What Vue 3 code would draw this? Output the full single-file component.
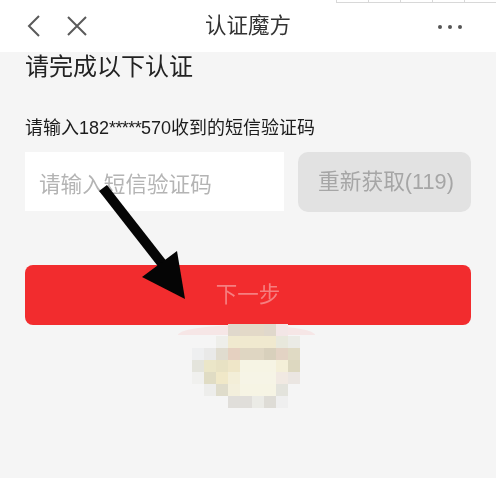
<template>
  <div class="page">
    <!-- restos de la captura arriba a la derecha -->
    <div class="corner-lines">
      <span v-for="n in 5" :key="n"></span>
    </div>

    <header class="nav">
      <div class="nav-left">
        <svg class="icon" width="20" height="24" viewBox="0 0 20 24">
          <path d="M16 2 L6 12 L16 22" fill="none" stroke="#5a5a5a" stroke-width="2" />
        </svg>
        <svg class="icon" width="20" height="20" viewBox="0 0 20 20">
          <path d="M1 1 L19 19 M19 1 L1 19" fill="none" stroke="#5a5a5a" stroke-width="2" />
        </svg>
      </div>
      <div class="nav-title">认证魔方</div>
      <div class="nav-more">
        <i></i><i></i><i></i>
      </div>
    </header>

    <main class="content">
      <h2 class="title">请完成以下认证</h2>
      <p class="label">请输入182<span class="stars">*****</span>570收到的短信验证码</p>

      <div class="code-row">
        <div class="code-input">请输入短信验证码</div>
        <div class="code-btn">重新获取(119)</div>
      </div>

      <button class="btn-next">下一步</button>

      <div class="avatar">
        <div class="avatar-arc"></div>
        <div class="mosaic">
          <span
            v-for="(color, index) in mosaico"
            :key="index"
            class="cell"
            :style="{ backgroundColor: color }"
          ></span>
        </div>
      </div>
    </main>

    <svg class="arrow" width="496" height="478" viewBox="0 0 496 478">
      <path d="M103 188 L164 266" stroke="#050505" stroke-width="10" fill="none" />
      <path d="M185 299 L142 277 L177 251 Z" fill="#050505" />
    </svg>
  </div>
</template>

<script setup>
const t = 'transparent';

// Filas del pixelado del avatar (10 x 7, bloques de 12px)
const mosaico = [
  t, t, t, '#e0d8cc', '#e3d9c8', '#e3d9c8', '#e0d8cc', '#f3e6e6', t, t,
  t, t, '#eeeeea', '#f0e9cf', '#f0e9cf', '#f0e9cf', '#f0e9cf', '#e8e8dc', '#ebebe6', t,
  '#eeeff0', '#e9e9e8', '#e0dccf', '#e5d0c0', '#dfd6c2', '#dfd6c2', '#d8d0bc', '#e3d3c4', '#e0dac4', t,
  '#e4e4dc', '#ebe6c8', '#e8e2c4', '#efe6c8', '#f6f4e4', '#f6f4e4', '#f6f4e4', '#f4efd8', '#ddd8c0', t,
  '#f0f0ee', '#e0dcc4', '#f0e8c8', '#f3eed8', '#f6f4e6', '#f6f4e6', '#f6f4e6', '#f1e9e2', '#ebe6e2', t,
  t, '#ededeb', '#dfdccb', '#f3efdc', '#f6f4e4', '#f6f4e4', '#f6f4e4', '#e3e3dc', t, t,
  t, t, t, '#e0deda', '#e0deda', '#ebebe6', '#dedcd6', '#efefef', t, t
];
</script>

<style>
body { margin: 0; background: #f5f5f5; }
</style>

<style scoped>
.page {
  position: relative; width: 496px; height: 478px; overflow: hidden;
  background: #f5f5f5;
  font-family: "Liberation Sans", "Noto Sans CJK SC", sans-serif;
  filter: blur(0.4px);
}

/* Barra superior */
.nav {
  height: 52px; background: #fff;
  display: flex; align-items: center; justify-content: space-between;
  padding: 0 34px 0 23px; position: relative;
}
.nav-left { display: flex; align-items: center; gap: 24px; }
.icon { display: block; }
.nav-title {
  position: absolute; left: 0; right: 0; text-align: center;
  font-size: 21.5px; color: #333; line-height: 52px;
}
.nav-more { display: flex; gap: 6px; margin-top: 2px; }
.nav-more i { width: 4px; height: 4px; border-radius: 50%; background: #555; display: block; }

.corner-lines {
  position: absolute; top: 0; left: 336px; right: 0; height: 2px; z-index: 2;
  display: flex; border-bottom: 1px solid #d8d8d8;
}
.corner-lines span { width: 33px; border-left: 1px solid #d8d8d8; }

/* Contenido */
.content { padding: 0 25px; }
.title {
  margin: 0; font-size: 24px; font-weight: 400; color: #222; line-height: 30px;
}
.label {
  margin: 34px 0 0; font-size: 18px; color: #1c1c1c; line-height: 24px;
}
.stars { letter-spacing: -0.6px; }
.code-row { display: flex; gap: 14px; margin-top: 12px; }
.code-input {
  width: 259px; height: 59px; background: #fff; color: #b4b4b4;
  font-size: 21.6px; line-height: 66px; padding-left: 14px; box-sizing: border-box;
}
.code-btn {
  width: 173px; height: 60px; background: #e2e2e2; border-radius: 10px;
  color: #a6a6a6; font-size: 21.7px; line-height: 60px; text-align: center;
  padding-left: 3px; box-sizing: border-box;
}
.btn-next {
  display: block; width: 446px; height: 60px; margin-top: 53px;
  background: #f22c2e; border: none; border-radius: 8px;
  color: #f57f80; font-size: 21.5px; font-family: inherit; padding: 0 0 6px;
}

/* Avatar pixelado */
.avatar { position: relative; height: 90px; }
.avatar-arc {
  position: absolute; left: 153px; top: 0; width: 137px; height: 10px;
  background: #f6e6e6; border-radius: 50% 50% 0 0 / 100% 100% 0 0;
}
.mosaic {
  position: absolute; left: 167px; top: -1px;
  display: grid; grid-template-columns: repeat(10, 12px); grid-auto-rows: 12px;
}
.cell { display: block; }

/* Flecha dibujada encima de la captura */
.arrow { position: absolute; left: 0; top: 0; pointer-events: none; z-index: 3; }
</style>
